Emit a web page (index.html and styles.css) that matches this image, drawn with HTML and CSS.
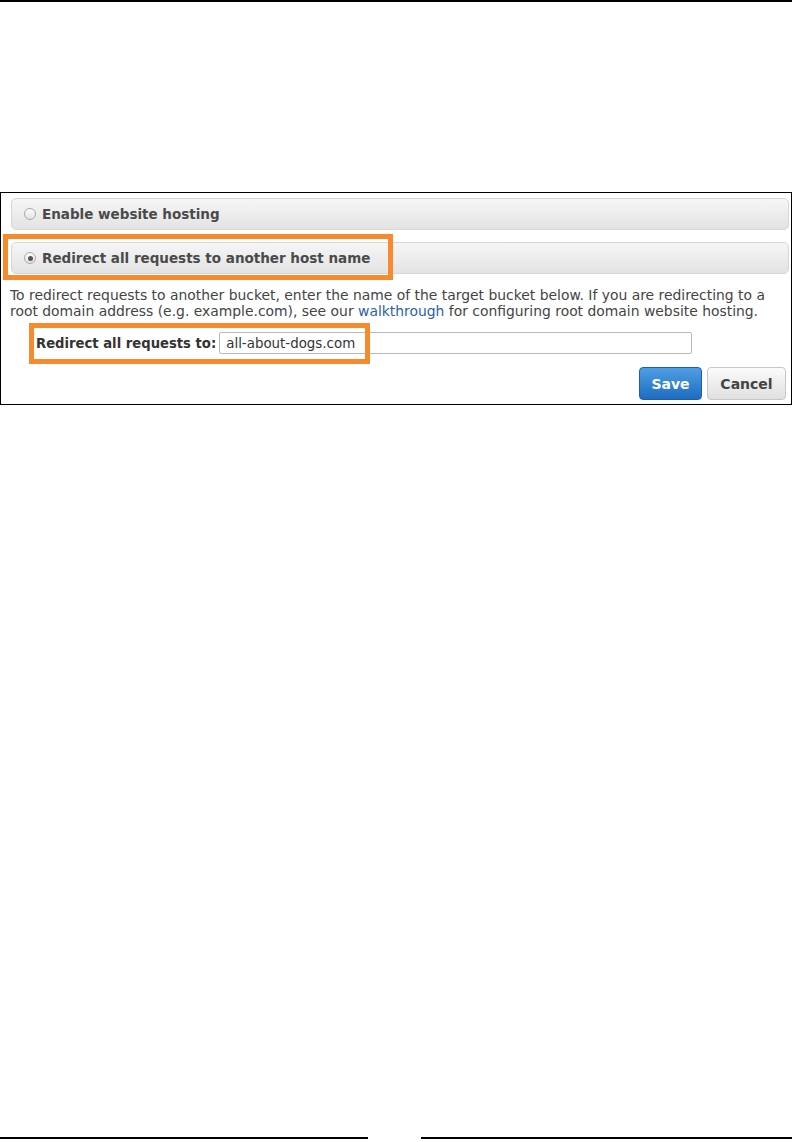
FILE: index.html
```html
<!DOCTYPE html>
<html lang="en">
<head>
<meta charset="utf-8">
<title>Static website hosting</title>
<link rel="stylesheet" href="styles.css">
</head>
<body>
<div class="rule-top"></div>
<section class="panel">
  <div class="option"><span class="radio"></span><span class="option-label">Enable website hosting</span></div>
  <div class="option option-gap"><span class="radio checked"></span><span class="option-label">Redirect all requests to another host name</span></div>
  <p class="help">To redirect requests to another bucket, enter the name of the target bucket below. If you are redirecting to a root domain address (e.g. example.com), see our <a href="#" class="link">walkthrough</a> for configuring root domain website hosting.</p>
  <div class="field-row">
    <label class="field-label" for="target">Redirect all requests to:</label>
    <input class="field-input" id="target" type="text" value="all-about-dogs.com">
  </div>
  <div class="actions">
    <button class="btn btn-primary" type="button">Save</button>
    <button class="btn btn-default" type="button">Cancel</button>
  </div>
  <span class="callout callout-option"></span>
  <span class="callout callout-field"></span>
</section>
<div class="rule-bottom"><span class="rule-seg rule-left"></span><span class="rule-seg rule-right"></span></div>
</body>
</html>
```

FILE: styles.css
```css
html, body {
  margin: 0;
  padding: 0;
  background: #fff;
}

body {
  width: 793px;
  font-family: "DejaVu Sans", Verdana, sans-serif;
  color: #444;
}

.rule-top {
  height: 2px;
  width: 792px;
  background: #000;
}

.panel {
  position: relative;
  box-sizing: border-box;
  width: 792px;
  margin-top: 190px;
  border: 1px solid #000;
  padding: 5px 2px 4px 10px;
}

.option {
  box-sizing: border-box;
  height: 32px;
  display: flex;
  align-items: center;
  gap: 6px;
  padding-left: 12px;
  border: 1px solid #d6d6d6;
  border-radius: 5px;
  background: linear-gradient(#f6f6f6, #e3e3e3);
}

.option-gap {
  margin-top: 12px;
}

.option-label {
  font-size: 13.5px;
  font-weight: bold;
  color: #4a4a4a;
}

.radio {
  box-sizing: border-box;
  width: 12px;
  height: 12px;
  border-radius: 50%;
  border: 1px solid #a9a9a9;
  background: linear-gradient(#fdfdfd, #e2e2e2);
  display: flex;
  align-items: center;
  justify-content: center;
}

.radio.checked::after {
  content: "";
  width: 5px;
  height: 5px;
  border-radius: 50%;
  background: #555;
}

.help {
  margin: 13px 0 0 -1px;
  font-size: 13.9px;
  line-height: 16px;
  color: #444;
}

.link {
  color: #2e5fa8;
  text-decoration: none;
}

.field-row {
  display: flex;
  align-items: center;
  gap: 3px;
  margin-top: 13px;
  padding-left: 25px;
}

.field-label {
  font-size: 13.2px;
  font-weight: bold;
  color: #333;
}

.field-input {
  box-sizing: border-box;
  width: 473px;
  height: 22px;
  margin: 0;
  padding: 0 6px;
  border: 1px solid #b9b9b9;
  border-radius: 2px;
  font-family: "DejaVu Sans", Verdana, sans-serif;
  font-size: 13.4px;
  color: #333;
  background: #fff;
}

.actions {
  display: flex;
  justify-content: flex-end;
  gap: 5px;
  margin-top: 13px;
  padding-right: 3px;
}

.btn {
  box-sizing: border-box;
  height: 33px;
  margin: 0;
  border-radius: 4px;
  font-family: "DejaVu Sans", Verdana, sans-serif;
  font-size: 14px;
  font-weight: bold;
  cursor: pointer;
}

.btn-primary {
  width: 63px;
  color: #fff;
  border: 1px solid #1b5fad;
  background: linear-gradient(#4d9fe3, #1f6cc1);
}

.btn-default {
  width: 79px;
  color: #444;
  border: 1px solid #c6c6c6;
  background: linear-gradient(#fbfbfb, #e0e0e0);
}

.callout {
  position: absolute;
  box-sizing: border-box;
  border: 5px solid #f68a2c;
  pointer-events: none;
}

.callout-option {
  left: 2px;
  top: 41px;
  width: 390px;
  height: 46px;
}

.callout-field {
  left: 28px;
  top: 130px;
  width: 341px;
  height: 41px;
}

.rule-bottom {
  display: flex;
  justify-content: space-between;
  width: 792px;
  margin-top: 732px;
}

.rule-seg {
  display: block;
  height: 2px;
  background: #000;
}

.rule-left {
  width: 368px;
}

.rule-right {
  width: 371px;
}
```
